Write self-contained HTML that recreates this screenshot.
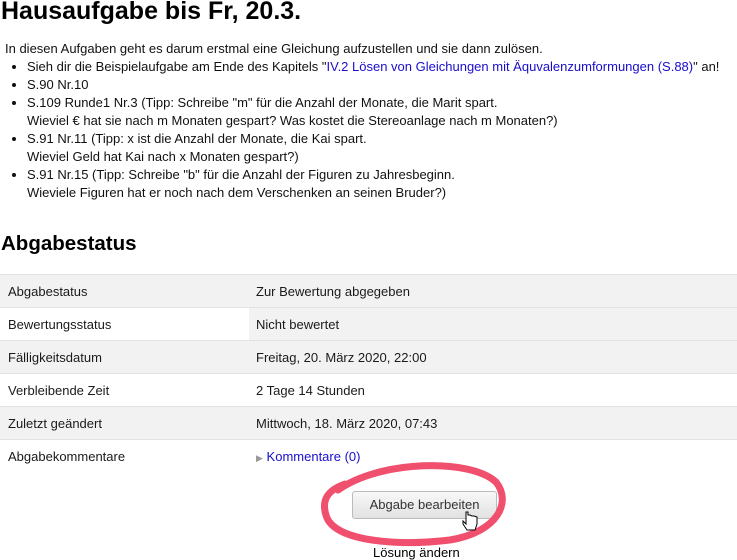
<!DOCTYPE html>
<html><head><meta charset="utf-8"><style>
body{margin:0;width:737px;height:560px;overflow:hidden;background:#fff;font-family:"Liberation Sans",Arial,sans-serif;color:#1a1a1a;position:relative}
h1{position:absolute;left:1px;top:-3px;margin:0;font-size:25px;font-weight:bold;color:#000}
.intro{position:absolute;left:5px;top:40px;font-size:13px;line-height:18px;color:#111}
ul{margin:0;padding-left:22px}
a{color:#1a0dcc;text-decoration:none}
h2{position:absolute;left:1px;top:232px;margin:0;font-size:20.5px;font-weight:bold;color:#000}
table{position:absolute;left:0;top:274px;width:737px;border-collapse:collapse;font-size:13px}
td{height:32px;border-top:1px solid #e3e3e3;padding:0 0 0 8px;vertical-align:middle}
td.v{padding-left:7px}
tr.g td{background:#f2f2f2}
.btn{position:absolute;left:352px;top:491px;width:143px;height:26px;border:1px solid #bbb;border-radius:3px;background:linear-gradient(#f8f8f8,#e2e2e2);font-size:13px;text-align:center;line-height:26px;color:#333}
.los{position:absolute;left:373px;top:545px;font-size:13px;color:#000}
</style></head><body>
<h1>Hausaufgabe bis Fr, 20.3.</h1>
<div class="intro">In diesen Aufgaben geht es darum erstmal eine Gleichung aufzustellen und sie dann zulösen.
<ul>
<li>Sieh dir die Beispielaufgabe am Ende des Kapitels "<a>IV.2 Lösen von Gleichungen mit Äquvalenzumformungen (S.88)</a>" an!</li>
<li>S.90 Nr.10</li>
<li>S.109 Runde1 Nr.3 (Tipp: Schreibe "m" für die Anzahl der Monate, die Marit spart.<br>Wieviel € hat sie nach m Monaten gespart? Was kostet die Stereoanlage nach m Monaten?)</li>
<li>S.91 Nr.11 (Tipp: x ist die Anzahl der Monate, die Kai spart.<br>Wieviel Geld hat Kai nach x Monaten gespart?)</li>
<li>S.91 Nr.15 (Tipp: Schreibe "b" für die Anzahl der Figuren zu Jahresbeginn.<br>Wieviele Figuren hat er noch nach dem Verschenken an seinen Bruder?)</li>
</ul></div>
<h2>Abgabestatus</h2>
<table>
<tr class="g"><td style="width:241px">Abgabestatus</td><td class="v">Zur Bewertung abgegeben</td></tr>
<tr><td>Bewertungsstatus</td><td class="v" style="background:#f2f2f2">Nicht bewertet</td></tr>
<tr class="g"><td>Fälligkeitsdatum</td><td class="v">Freitag, 20. März 2020, 22:00</td></tr>
<tr><td>Verbleibende Zeit</td><td class="v">2 Tage 14 Stunden</td></tr>
<tr class="g"><td>Zuletzt geändert</td><td class="v">Mittwoch, 18. März 2020, 07:43</td></tr>
<tr><td>Abgabekommentare</td><td class="v"><span style="color:#999;font-size:9px">&#9654;</span> <a>Kommentare (0)</a></td></tr>
</table>
<div class="btn">Abgabe bearbeiten</div>
<div class="los">Lösung ändern</div>
<svg style="position:absolute;left:0;top:0" width="737" height="560">
<path d="M338 490 C380 460 470 458 496 482 C512 502 498 532 450 540 C400 546 338 542 327 518 C320 500 328 490 345 484" fill="none" stroke="#f0506e" stroke-width="7" stroke-linecap="round"/>
<path d="M466 512 v12 l-3 -3 v3 l4 6 h8 l2 -6 v-7 l-3 -1 -2 0 -2 -1 -2 0 v-3 z" fill="#fff" stroke="#000" stroke-width="1"/>
</svg>
</body></html>
